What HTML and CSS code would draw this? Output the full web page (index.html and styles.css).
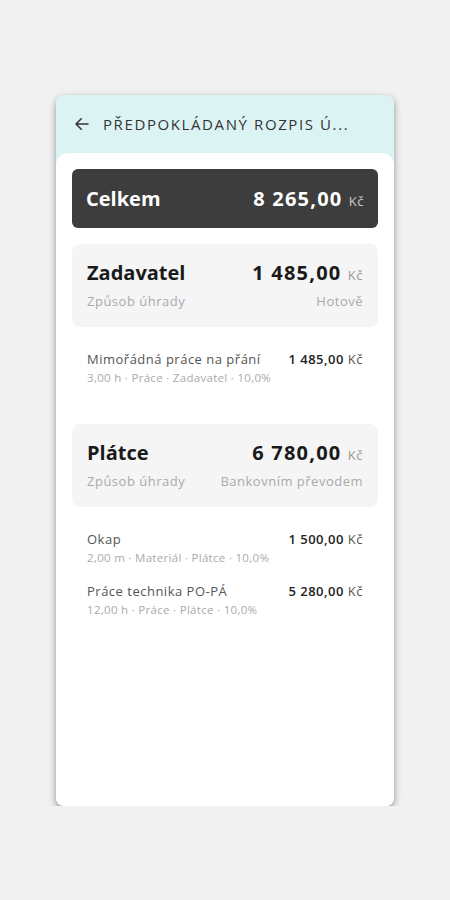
FILE: index.html
```html
<!DOCTYPE html>
<html lang="cs">
<head>
  <meta charset="UTF-8" />
  <meta name="viewport" content="width=device-width, initial-scale=1.0" />
  <title>Předpokládaný rozpis úhrad</title>
  <link rel="stylesheet" href="styles.css">
</head>
<body>
  <div class="phone">
    <div class="topbar">
      <svg class="back" width="18" height="18" viewBox="0 0 24 24" fill="none" stroke="#333" stroke-width="2" stroke-linecap="round" stroke-linejoin="round">
        <path d="M20 12H4M11 5l-7 7 7 7" />
      </svg>
      <span class="title">PŘEDPOKLÁDANÝ ROZPIS Ú...</span>
    </div>

    <div class="sheet">
      <div class="total">
        <span>Celkem</span>
        <span class="num">8 265,00 <small>Kč</small></span>
      </div>

      <div class="payer">
        <div class="payer-row">
          <span class="payer-name">Zadavatel</span>
          <span class="payer-sum num">1 485,00 <small>Kč</small></span>
        </div>
        <div class="payer-row sub">
          <span>Způsob úhrady</span>
          <span>Hotově</span>
        </div>
      </div>

      <div class="items">
        <div class="item">
          <div class="item-row">
            <span class="item-name">Mimořádná práce na přání</span>
            <span class="item-sum"><b>1 485,00</b> Kč</span>
          </div>
          <div class="item-info">3,00 h · Práce · Zadavatel · 10,0%</div>
        </div>
      </div>

      <div class="payer">
        <div class="payer-row">
          <span class="payer-name">Plátce</span>
          <span class="payer-sum num">6 780,00 <small>Kč</small></span>
        </div>
        <div class="payer-row sub">
          <span>Způsob úhrady</span>
          <span>Bankovním převodem</span>
        </div>
      </div>

      <div class="items">
        <div class="item">
          <div class="item-row">
            <span class="item-name">Okap</span>
            <span class="item-sum"><b>1 500,00</b> Kč</span>
          </div>
          <div class="item-info">2,00 m · Materiál · Plátce · 10,0%</div>
        </div>
        <div class="item">
          <div class="item-row">
            <span class="item-name">Práce technika PO-PÁ</span>
            <span class="item-sum"><b>5 280,00</b> Kč</span>
          </div>
          <div class="item-info">12,00 h · Práce · Plátce · 10,0%</div>
        </div>
      </div>
    </div>
  </div>
</body>
</html>
```

FILE: styles.css
```css
body {
  margin: 0;
  padding-top: 95px;
  background: #f1f1f1;
  font-family: "Open Sans", sans-serif;
  color: #222;
}
.phone {
  width: 338px;
  height: 711px;
  margin: 0 auto;
  background: #dcf3f3;
  border-radius: 8px;
  overflow: hidden;
  box-shadow: 0 3px 7px rgba(0, 0, 0, 0.4);
  display: flex;
  flex-direction: column;
}
.topbar {
  height: 58px;
  display: flex;
  align-items: center;
  padding-left: 17px;
  flex-shrink: 0;
}
.back {
  margin-right: 12px;
}
.title {
  font-size: 15px;
  color: #333;
  letter-spacing: 1.6px;
}
.sheet {
  flex: 1;
  background: white;
  border-radius: 12px 12px 0 0;
  padding: 16px 16px 0;
}
.total {
  height: 59px;
  background: #3d3d3d;
  border-radius: 6px;
  color: white;
  display: flex;
  align-items: center;
  justify-content: space-between;
  padding: 0 14px;
  font-size: 20px;
  font-weight: 700;
}
.num {
  letter-spacing: 1.2px;
}
.total small,
.payer-sum small {
  font-size: 13px;
  font-weight: 400;
  letter-spacing: 0.5px;
}
.total small {
  color: #ccc;
}
.payer {
  margin-top: 16px;
  background: #f5f5f5;
  border-radius: 8px;
  padding: 14px 15px 15px;
}
.payer-row {
  display: flex;
  justify-content: space-between;
  align-items: baseline;
}
.payer-name,
.payer-sum {
  font-size: 20px;
  font-weight: 700;
  line-height: 30px;
  color: #1a1a1a;
}
.payer-sum small {
  color: #999;
}
.sub {
  font-size: 13px;
  color: #aaa;
  line-height: 22px;
  letter-spacing: 0.5px;
}
.items {
  padding: 23px 15px 6px;
}
.item {
  margin-bottom: 15px;
}
.item-row {
  display: flex;
  justify-content: space-between;
  font-size: 13px;
  line-height: 19px;
  color: #555;
  letter-spacing: 0.5px;
}
.item-sum b {
  color: #222;
  font-weight: 600;
}
.item-info {
  font-size: 11.5px;
  color: #aaa;
  line-height: 18px;
  letter-spacing: 0.3px;
}
```
